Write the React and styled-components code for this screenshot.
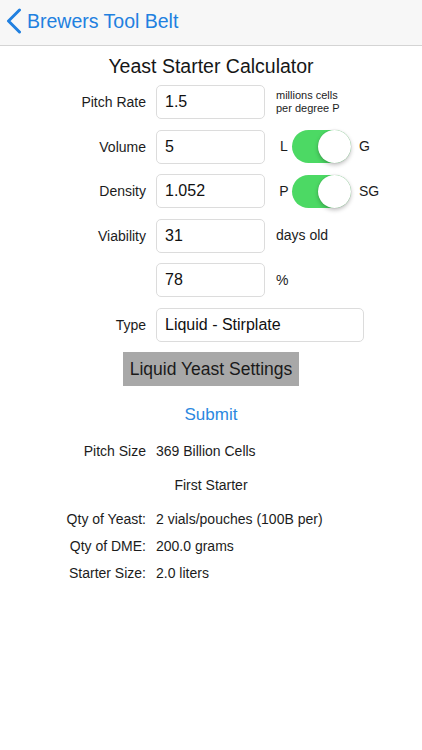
import React from "react";
import styled, { createGlobalStyle } from "styled-components";

const Global = createGlobalStyle`
  html, body { margin: 0; padding: 0; background: #ffffff; }
  body { font-family: "Liberation Sans", Arial, sans-serif; color: #1c1c1c; }
  * { box-sizing: border-box; }
`;

const Screen = styled.div`
  width: 422px;
  min-height: 750px;
  background: #ffffff;
`;

const NavBar = styled.div`
  height: 46px;
  background: #f7f7f7;
  border-bottom: 1px solid #d4d4d4;
  display: flex;
  align-items: center;
  padding: 0 0 3px 6px;
  gap: 5px;
`;

const NavTitle = styled.span`
  font-size: 19.5px;
  color: #2180e0;
`;

const Title = styled.h1`
  margin: 9px 0 0;
  font-size: 19.5px;
  line-height: 23px;
  font-weight: normal;
  text-align: center;
  color: #161616;
`;

const Form = styled.div`
  margin-top: 7px;
  display: grid;
  grid-template-columns: 146px 109px 1fr;
  grid-auto-rows: 34px;
  column-gap: 10px;
  row-gap: 10.5px;
  align-items: center;
`;

const Label = styled.div`
  text-align: right;
  font-size: 14px;
  color: #1c1c1c;
`;

const Field = styled.div`
  height: 34px;
  border: 1px solid #dcdcdc;
  border-radius: 5px;
  padding: 0 8px;
  display: flex;
  align-items: center;
  font-size: 16px;
  color: #111;
  grid-column: ${(p) => (p.$wide ? "2 / span 2" : "2")};
  width: ${(p) => (p.$wide ? "208px" : "auto")};
`;

const Extra = styled.div`
  padding-left: 1px;
  font-size: ${(p) => (p.$small ? "11px" : "14px")};
  line-height: ${(p) => (p.$small ? "13.5px" : "17px")};
  color: #1c1c1c;
  display: flex;
  align-items: center;
`;

const Letter = styled.span`
  width: 14px;
  text-align: center;
  margin-left: 1px;
  font-size: 14px;
`;

const SwitchTrack = styled.span`
  position: relative;
  width: 59px;
  height: 33px;
  border-radius: 17px;
  background: #4cd964;
  margin: 0 8px 0 1px;
`;

const Knob = styled.span`
  position: absolute;
  right: 0;
  top: 0;
  width: 33px;
  height: 33px;
  border-radius: 50%;
  background: #ffffff;
  box-shadow: 0 2px 4px rgba(0, 0, 0, 0.25), 0 0 0 0.5px rgba(0, 0, 0, 0.08);
`;

const GrayButton = styled.div`
  margin: 10.5px auto 0;
  width: 176px;
  height: 34px;
  background: #a8a8a8;
  display: flex;
  align-items: center;
  justify-content: center;
  font-size: 17.5px;
  color: #1a1a1a;
`;

const Submit = styled.div`
  margin-top: 19px;
  text-align: center;
  font-size: 17px;
  line-height: 20px;
  color: #2b88e0;
`;

const Results = styled.div`
  margin-top: 18px;
  display: flex;
  flex-direction: column;
`;

const ResultRow = styled.div`
  display: grid;
  grid-template-columns: 146px 1fr;
  column-gap: 10px;
  font-size: 14px;
  line-height: 17px;
  margin-top: ${(p) => p.$gap || 0}px;
`;

const ResultLabel = styled.span`
  text-align: right;
`;

const Center = styled.div`
  text-align: center;
  font-size: 14px;
  line-height: 17px;
  margin-top: ${(p) => p.$gap || 0}px;
`;

function Toggle() {
  return (
    <SwitchTrack>
      <Knob />
    </SwitchTrack>
  );
}

export default function App() {
  return (
    <Screen>
      <Global />
      <NavBar>
        <svg width="16" height="26" viewBox="0 0 16 26">
          <polyline
            points="13.5,2 2.5,13 13.5,24"
            fill="none"
            stroke="#2180e0"
            strokeWidth="3"
            strokeLinecap="round"
            strokeLinejoin="round"
          />
        </svg>
        <NavTitle>Brewers Tool Belt</NavTitle>
      </NavBar>
      <Title>Yeast Starter Calculator</Title>
      <Form>
        <Label>Pitch Rate</Label>
        <Field>1.5</Field>
        <Extra $small>
          millions cells
          <br />
          per degree P
        </Extra>

        <Label>Volume</Label>
        <Field>5</Field>
        <Extra>
          <Letter>L</Letter>
          <Toggle />
          G
        </Extra>

        <Label>Density</Label>
        <Field>1.052</Field>
        <Extra>
          <Letter>P</Letter>
          <Toggle />
          SG
        </Extra>

        <Label>Viability</Label>
        <Field>31</Field>
        <Extra>days old</Extra>

        <Label />
        <Field>78</Field>
        <Extra>%</Extra>

        <Label>Type</Label>
        <Field $wide>Liquid - Stirplate</Field>
      </Form>
      <GrayButton>Liquid Yeast Settings</GrayButton>
      <Submit>Submit</Submit>
      <Results>
        <ResultRow>
          <ResultLabel>Pitch Size</ResultLabel>
          <span>369 Billion Cells</span>
        </ResultRow>
        <Center $gap={17}>First Starter</Center>
        <ResultRow $gap={17}>
          <ResultLabel>Qty of Yeast:</ResultLabel>
          <span>2 vials/pouches (100B per)</span>
        </ResultRow>
        <ResultRow $gap={10}>
          <ResultLabel>Qty of DME:</ResultLabel>
          <span>200.0 grams</span>
        </ResultRow>
        <ResultRow $gap={10}>
          <ResultLabel>Starter Size:</ResultLabel>
          <span>2.0 liters</span>
        </ResultRow>
      </Results>
    </Screen>
  );
}
